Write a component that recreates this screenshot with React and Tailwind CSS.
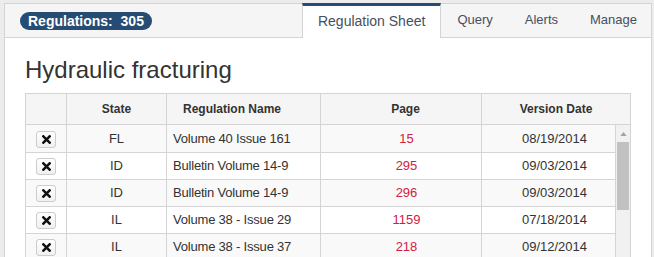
import React from 'react';

const TABS = ['Query', 'Alerts', 'Manage'];

const ROWS = [
  { state: 'FL', name: 'Volume 40 Issue 161', page: '15', date: '08/19/2014' },
  { state: 'ID', name: 'Bulletin Volume 14-9', page: '295', date: '09/03/2014' },
  { state: 'ID', name: 'Bulletin Volume 14-9', page: '296', date: '09/03/2014' },
  { state: 'IL', name: 'Volume 38 - Issue 29', page: '1159', date: '07/18/2014' },
  { state: 'IL', name: 'Volume 38 - Issue 37', page: '218', date: '09/12/2014' },
];

function XIcon() {
  return (
    <svg viewBox="0 0 10 10" className="h-[9px] w-[9px]">
      <path d="M1.5 1.5 L8.5 8.5 M8.5 1.5 L1.5 8.5" stroke="#111" strokeWidth="2.8" strokeLinecap="square" />
    </svg>
  );
}

function Cols({ last }) {
  return (
    <colgroup>
      <col className="w-[41px]" />
      <col className="w-[100px]" />
      <col className="w-[154px]" />
      <col className="w-[161px]" />
      <col className={last} />
    </colgroup>
  );
}

export default function App() {
  return (
    <div
      className="h-[257px] overflow-hidden bg-[#ececec] pt-[3px] pl-[4px] pr-[2px] text-[#333]"
      style={{ fontFamily: '"Liberation Sans", Arial, sans-serif' }}
    >
      <div className="h-[300px] border-x border-t border-[#d4d4d4] bg-white">
        <div className="flex h-[34px] items-end border-b border-[#d4d4d4] bg-[#f5f5f5]">
          <div className="flex flex-1 self-center pl-[15px] pt-[1px]">
            <span className="whitespace-pre rounded-full bg-[#264c73] px-[8px] text-[14px] font-bold leading-[18px] text-white">
              Regulations:  305
            </span>
          </div>
          <div className="-mb-px flex h-[35px] items-center border-x border-t-[3px] border-[#d4d4d4] border-t-[#264c73] bg-white px-[15px] pb-[1px] text-[14px] text-[#46505c]">
            Regulation Sheet
          </div>
          <div className="-mr-[2px] flex">
            {TABS.map((t) => (
              <div key={t} className="flex h-[33px] items-center px-[16px] pb-[1px] text-[13px] text-[#46505c]">
                {t}
              </div>
            ))}
          </div>
        </div>

        <div className="pl-[20px]">
          <h1 className="mt-[18px] mb-[10px] text-[24px] leading-[27px] font-normal text-[#333]">Hydraulic fracturing</h1>

          <div className="w-[606px]">
            <table className="w-full table-fixed border-collapse text-[12px]">
              <Cols />
              <thead>
                <tr className="h-[31px] bg-[#f5f5f5]">
                  <th className="border border-[#d4d4d4]"></th>
                  <th className="border border-[#d4d4d4] font-bold">State</th>
                  <th className="border border-[#d4d4d4] pl-[16px] text-left font-bold">Regulation Name</th>
                  <th className="border border-[#d4d4d4] pl-[9px] font-bold">Page</th>
                  <th className="border border-[#d4d4d4] font-bold">Version Date</th>
                </tr>
              </thead>
            </table>
            <div className="flex h-[180px] border-r border-[#d4d4d4]">
              <table className="w-[591px] table-fixed self-start border-collapse text-[13px]">
                <Cols />
                <tbody>
                  {ROWS.map((r, i) => (
                    <tr key={i} className={i % 2 === 0 ? 'h-[27px] bg-[#f9f9f9]' : 'h-[27px] bg-white'}>
                      <td className="border border-t-0 border-[#d4d4d4] text-center">
                        <button className="inline-flex h-[17px] w-[20px] items-center justify-center rounded-[3px] border border-[#ccc] bg-gradient-to-b from-white to-[#f0f0f0] align-middle">
                          <XIcon />
                        </button>
                      </td>
                      <td className="border border-t-0 border-[#d4d4d4] text-center">{r.state}</td>
                      <td className="border border-t-0 border-[#d4d4d4] pl-[6px] tracking-[-0.2px]">{r.name}</td>
                      <td className="border border-t-0 border-[#d4d4d4] pl-[11px] text-center text-[#d3203f]">{r.page}</td>
                      <td className="border border-t-0 border-[#d4d4d4] pl-[12px] text-center">{r.date}</td>
                    </tr>
                  ))}
                </tbody>
              </table>
              <div className="flex w-[14px] flex-col bg-[#f1f1f1]">
                <div className="flex h-[17px] items-center justify-center">
                  <svg viewBox="0 0 8 5" className="h-[4px] w-[7px]">
                    <path d="M0 5 L4 0 L8 5 Z" fill="#a3a3a3" />
                  </svg>
                </div>
                <div className="mx-[1px] h-[68px] bg-[#c1c1c1]" />
              </div>
            </div>
          </div>
        </div>
      </div>
    </div>
  );
}
